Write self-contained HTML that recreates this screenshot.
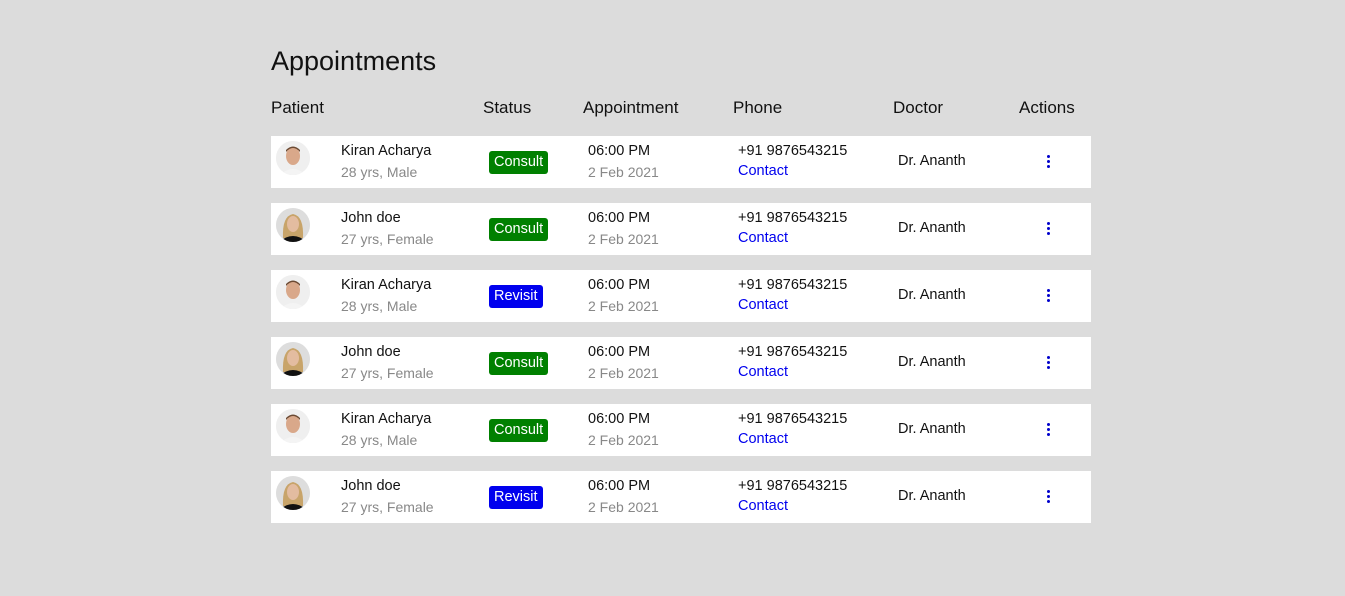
<!DOCTYPE html>
<html><head><style>
body{margin:0;background:#dcdcdc;font-family:"Liberation Sans",sans-serif;width:1345px;height:596px;position:relative;overflow:hidden;color:#111}
.a{position:absolute;white-space:nowrap}
h1{position:absolute;left:271px;top:46px;margin:0;font-size:27px;font-weight:normal;color:#111}
.h{font-size:17px;top:98px}
.row{position:absolute;left:271px;width:820px;height:52px;background:#fff}
.av{position:absolute;left:5px;top:5px;width:34px;height:34px;border-radius:50%;overflow:hidden;background:#eee}
.t{font-size:14.5px;color:#111}
.s{font-size:14px;color:#888}
.badge{position:absolute;left:218px;top:15px;height:23px;line-height:23px;padding:0 5px;border-radius:3px;color:#fff;font-size:14.5px}
.g{background:#008000}.b{background:#0000ee}
.c{color:#0000ee;font-size:14.5px}
.dots{position:absolute;left:776px;top:19px;width:3px}
.dots i{display:block;width:3px;height:3px;border-radius:50%;background:#0000cc;margin-bottom:2px}
</style></head><body>
<h1>Appointments</h1>
<div class="a h" style="left:271px">Patient</div>
<div class="a h" style="left:483px">Status</div>
<div class="a h" style="left:583px">Appointment</div>
<div class="a h" style="left:733px">Phone</div>
<div class="a h" style="left:893px">Doctor</div>
<div class="a h" style="left:1019px">Actions</div>

<div class="row" style="top:136px">
<div class="av"><svg width="34" height="34"><rect width="34" height="34" fill="#efefef"/><ellipse cx="17" cy="15" rx="7" ry="9" fill="#d9a88a"/><path d="M10 11 Q17 3 24 11 L24 9 Q17 2 10 9Z" fill="#6b4a33"/><path d="M4 34 Q17 22 30 34Z" fill="#f4f4f4"/></svg></div>
<div class="a t" style="left:70px;top:7px">Kiran Acharya</div><div class="a s" style="left:70px;top:28px">28 yrs, Male</div>
<div class="badge g">Consult</div>
<div class="a t" style="left:317px;top:7px">06:00 PM</div><div class="a s" style="left:317px;top:28px">2 Feb 2021</div>
<div class="a t" style="left:467px;top:7px">+91 9876543215</div><div class="a c" style="left:467px;top:27px">Contact</div>
<div class="a t" style="left:627px;top:17px">Dr. Ananth</div>
<div class="dots"><i></i><i></i><i></i></div>
</div>
<div class="row" style="top:203px">
<div class="av"><svg width="34" height="34"><rect width="34" height="34" fill="#ddd"/><path d="M7 30 Q6 8 17 6 Q28 8 27 30Z" fill="#c8a46a"/><ellipse cx="17" cy="16" rx="6" ry="8" fill="#e3bca0"/><path d="M3 34 Q17 22 31 34Z" fill="#111"/></svg></div>
<div class="a t" style="left:70px;top:7px">John doe</div><div class="a s" style="left:70px;top:28px">27 yrs, Female</div>
<div class="badge g">Consult</div>
<div class="a t" style="left:317px;top:7px">06:00 PM</div><div class="a s" style="left:317px;top:28px">2 Feb 2021</div>
<div class="a t" style="left:467px;top:7px">+91 9876543215</div><div class="a c" style="left:467px;top:27px">Contact</div>
<div class="a t" style="left:627px;top:17px">Dr. Ananth</div>
<div class="dots"><i></i><i></i><i></i></div>
</div>
<div class="row" style="top:270px">
<div class="av"><svg width="34" height="34"><rect width="34" height="34" fill="#efefef"/><ellipse cx="17" cy="15" rx="7" ry="9" fill="#d9a88a"/><path d="M10 11 Q17 3 24 11 L24 9 Q17 2 10 9Z" fill="#6b4a33"/><path d="M4 34 Q17 22 30 34Z" fill="#f4f4f4"/></svg></div>
<div class="a t" style="left:70px;top:7px">Kiran Acharya</div><div class="a s" style="left:70px;top:28px">28 yrs, Male</div>
<div class="badge b">Revisit</div>
<div class="a t" style="left:317px;top:7px">06:00 PM</div><div class="a s" style="left:317px;top:28px">2 Feb 2021</div>
<div class="a t" style="left:467px;top:7px">+91 9876543215</div><div class="a c" style="left:467px;top:27px">Contact</div>
<div class="a t" style="left:627px;top:17px">Dr. Ananth</div>
<div class="dots"><i></i><i></i><i></i></div>
</div>
<div class="row" style="top:337px">
<div class="av"><svg width="34" height="34"><rect width="34" height="34" fill="#ddd"/><path d="M7 30 Q6 8 17 6 Q28 8 27 30Z" fill="#c8a46a"/><ellipse cx="17" cy="16" rx="6" ry="8" fill="#e3bca0"/><path d="M3 34 Q17 22 31 34Z" fill="#111"/></svg></div>
<div class="a t" style="left:70px;top:7px">John doe</div><div class="a s" style="left:70px;top:28px">27 yrs, Female</div>
<div class="badge g">Consult</div>
<div class="a t" style="left:317px;top:7px">06:00 PM</div><div class="a s" style="left:317px;top:28px">2 Feb 2021</div>
<div class="a t" style="left:467px;top:7px">+91 9876543215</div><div class="a c" style="left:467px;top:27px">Contact</div>
<div class="a t" style="left:627px;top:17px">Dr. Ananth</div>
<div class="dots"><i></i><i></i><i></i></div>
</div>
<div class="row" style="top:404px">
<div class="av"><svg width="34" height="34"><rect width="34" height="34" fill="#efefef"/><ellipse cx="17" cy="15" rx="7" ry="9" fill="#d9a88a"/><path d="M10 11 Q17 3 24 11 L24 9 Q17 2 10 9Z" fill="#6b4a33"/><path d="M4 34 Q17 22 30 34Z" fill="#f4f4f4"/></svg></div>
<div class="a t" style="left:70px;top:7px">Kiran Acharya</div><div class="a s" style="left:70px;top:28px">28 yrs, Male</div>
<div class="badge g">Consult</div>
<div class="a t" style="left:317px;top:7px">06:00 PM</div><div class="a s" style="left:317px;top:28px">2 Feb 2021</div>
<div class="a t" style="left:467px;top:7px">+91 9876543215</div><div class="a c" style="left:467px;top:27px">Contact</div>
<div class="a t" style="left:627px;top:17px">Dr. Ananth</div>
<div class="dots"><i></i><i></i><i></i></div>
</div>
<div class="row" style="top:471px">
<div class="av"><svg width="34" height="34"><rect width="34" height="34" fill="#ddd"/><path d="M7 30 Q6 8 17 6 Q28 8 27 30Z" fill="#c8a46a"/><ellipse cx="17" cy="16" rx="6" ry="8" fill="#e3bca0"/><path d="M3 34 Q17 22 31 34Z" fill="#111"/></svg></div>
<div class="a t" style="left:70px;top:7px">John doe</div><div class="a s" style="left:70px;top:28px">27 yrs, Female</div>
<div class="badge b">Revisit</div>
<div class="a t" style="left:317px;top:7px">06:00 PM</div><div class="a s" style="left:317px;top:28px">2 Feb 2021</div>
<div class="a t" style="left:467px;top:7px">+91 9876543215</div><div class="a c" style="left:467px;top:27px">Contact</div>
<div class="a t" style="left:627px;top:17px">Dr. Ananth</div>
<div class="dots"><i></i><i></i><i></i></div>
</div>
</body></html>
